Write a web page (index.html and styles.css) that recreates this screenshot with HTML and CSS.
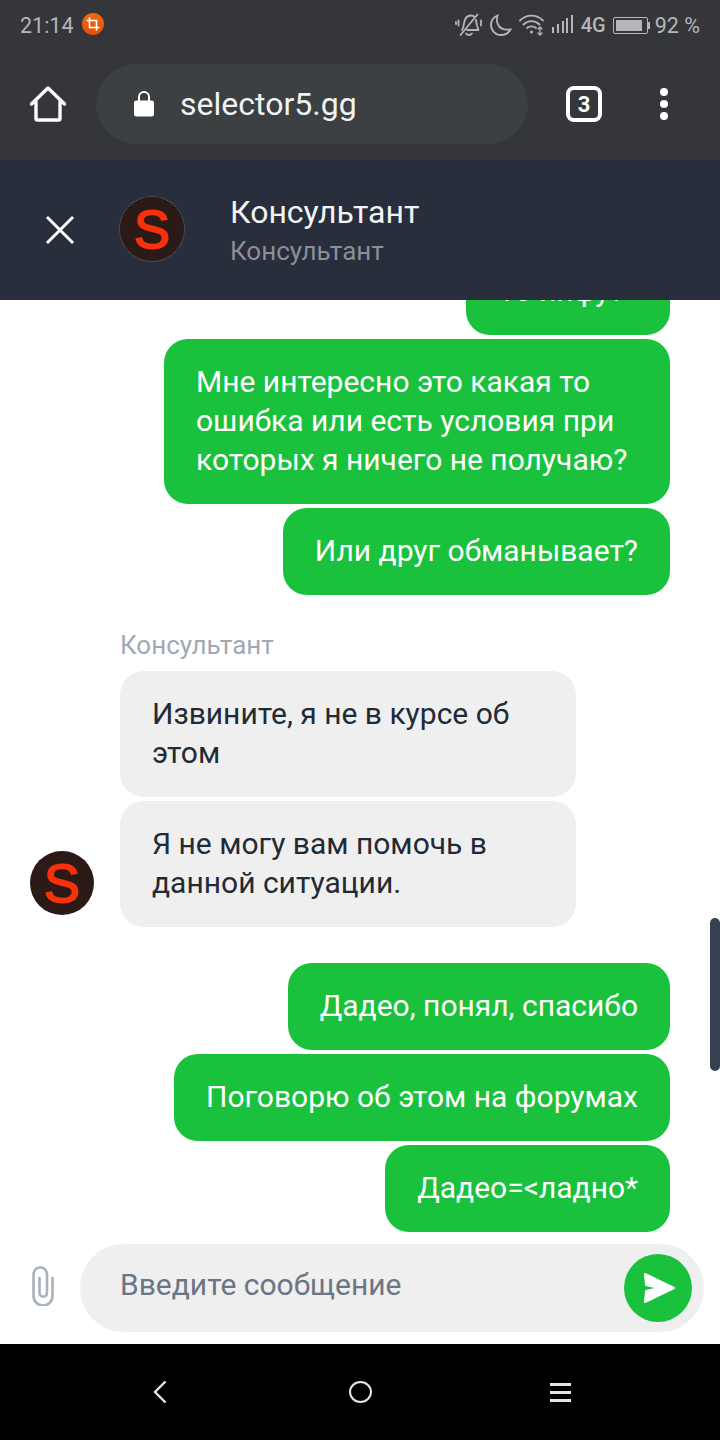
FILE: index.html
```html
<!DOCTYPE html>
<html lang="ru">

<head>
  <meta charset="utf-8">
  <title>selector5.gg</title>
  <link rel="stylesheet" href="styles.css">
</head>

<body>
  <div class="phone">
    <!-- Status bar -->
    <div class="statusBar">
      <div class="statusLeft">
        <span class="statusTime">21:14</span>
        <span class="shotBadge">
          <svg width="14" height="14" viewBox="0 0 14 14" fill="none" stroke="#fff" stroke-width="1.6">
            <path d="M3.5 0.5V10.5H13.5" />
            <path d="M0.5 3.5H10.5V13.5" />
          </svg>
        </span>
      </div>
      <div class="statusRight">
        <svg class="bellIcon" width="28" height="24" viewBox="0 0 28 24" fill="none" stroke="#b4b6b8" stroke-width="1.800" stroke-linecap="round" stroke-linejoin="round">
          <path d="M7 17c1.500-2 1.500-4.500 2-7 .7-4 3-7.500 7-7.500 1.500 0 2.800.5 3.800 1.500" />
          <path d="M21 7c.5 3 .5 6 2 8.500l.5 1.500H12" />
          <path d="M11 20.500c1.500 2 4.500 2 6 0" />
          <path d="M5.500 22L22.500 1.500" />
          <path d="M3.500 7.500v5M1 9v2M26 7.500v5" />
        </svg>
        <svg class="moonIcon" width="22" height="22" viewBox="0 0 22 22" fill="none" stroke="#b4b6b8" stroke-width="1.800">
          <path d="M7.500 1.500C3 3.500 1 7 1 11c0 5.500 4.500 10 10 10 4 0 7.500-1.800 9.500-5.500-6 .8-10.500-.8-12.500-5-1.300-2.800-1.500-5.800-.5-9z" />
        </svg>
        <svg class="wifiIcon" width="25" height="22" viewBox="0 0 25 22" fill="none" stroke="#b4b6b8" stroke-width="1.800" stroke-linecap="round">
          <path d="M1 6.500c6.500-6.500 16.500-6.500 23 0" />
          <path d="M4.500 10.500c4.500-4.500 11.500-4.500 16 0" />
          <path d="M8 14c2.500-2.300 6.500-2.300 9 0" />
          <circle cx="12.500" cy="18" r="1.500" fill="#b4b6b8" stroke="none" />
          <path d="M21 13v8M19 15l2-2 2 2M19 19l2 2 2-2" stroke-width="1.300" />
        </svg>
        <svg class="signalIcon" width="21" height="18" viewBox="0 0 21 18" fill="#b4b6b8">
          <rect x="0" y="12" width="2" height="6" />
          <rect x="5" y="9" width="2" height="9" />
          <rect x="10" y="6" width="2" height="12" />
          <rect x="14" y="3" width="2" height="15" />
          <rect x="19" y="0" width="2" height="18" />
        </svg>
        <span class="statusText net">4G</span>
        <span class="batteryOuter"><span class="batteryLevel"></span></span>
        <span class="batteryBump"></span>
        <span class="statusText pct">92 %</span>
      </div>
    </div>

    <!-- Browser toolbar -->
    <div class="toolbar">
      <svg class="homeIcon" width="38" height="38" viewBox="0 0 38 38" fill="none" stroke="#fff" stroke-width="3.400" stroke-linejoin="round" stroke-linecap="round">
        <path d="M2.500 19L19 3l16.500 16" />
        <path d="M7 16.500V33.500q0 1.500 1.500 1.500h21q1.500 0 1.500-1.500V16.500" />
      </svg>
      <div class="urlBar">
        <svg width="22" height="28" viewBox="0 0 22 28" fill="#fff">
          <path d="M3 10.500h16a2.500 2.500 0 0 1 2 2.500v11a2.500 2.500 0 0 1-2.500 2.500h-15A2.500 2.500 0 0 1 1 24V13a2.500 2.500 0 0 1 2-2.500z" />
          <path d="M6 12V7a5 5 0 0 1 10 0v5" fill="none" stroke="#fff" stroke-width="2" />
        </svg>
        <span class="urlText">selector5.gg</span>
      </div>
      <div class="tabCount">3</div>
      <div class="menuDots"><i></i><i></i><i></i></div>
    </div>

    <!-- Chat header -->
    <div class="chatHeader">
      <svg class="closeIcon" width="30" height="30" viewBox="0 0 30 30" stroke="#fff" stroke-width="3">
        <path d="M2 2L28 28M28 2L2 28" />
      </svg>
      <div class="avatar headerAvatar">S</div>
      <div class="headerText">
        <div class="headerName">Консультант</div>
        <div class="headerRole">Консультант</div>
      </div>
    </div>

    <!-- Messages -->
    <div class="chat">
      <div class="msg msgOut msgFirst">То инфу?</div>
      <div class="msg msgOut">Мне интересно это какая то ошибка или есть условия при которых я ничего не получаю?</div>
      <div class="msg msgOut">Или друг обманывает?</div>

      <div class="agentBlock">
        <div class="agentAvatarCol"><div class="avatar">S</div></div>
        <div class="agentMsgs">
          <div class="agentName">Консультант</div>
          <div class="msg msgIn">Извините, я не в курсе об этом</div>
          <div class="msg msgIn">Я не могу вам помочь в данной ситуации.</div>
        </div>
      </div>

      <div class="msg msgOut">Дадео, понял, спасибо</div>
      <div class="msg msgOut">Поговорю об этом на форумах</div>
      <div class="msg msgOut">Дадео=&lt;ладно*</div>
      <div class="scrollThumb"></div>
    </div>

    <!-- Composer -->
    <div class="composer">
      <svg class="clipIcon" width="22" height="40" viewBox="0 0 22 40" fill="none" stroke="#a9b1bd" stroke-width="2.600" stroke-linecap="round">
        <path d="M20.500 12V30a9.500 9.500 0 0 1-19 0V8.500a6.750 7.200 0 0 1 13.500 0V27a3.750 3.750 0 0 1-7.500 0V12" />
      </svg>
      <div class="inputBox">
        <span class="inputHint">Введите сообщение</span>
        <div class="sendBtn">
          <svg width="33" height="32" viewBox="0 0 33 32" fill="#fff" stroke="#fff" stroke-width="2" stroke-linejoin="round">
            <path d="M2 2L31 16 2 30 3 19 16 16 3 13z" />
          </svg>
        </div>
      </div>
    </div>

    <!-- Android nav -->
    <div class="navBar">
      <svg width="14" height="24" viewBox="0 0 14 24" fill="none" stroke="#e6e6e6" stroke-width="2.400">
        <path d="M12.500 1.500L2 12l10.500 10.500" />
      </svg>
      <span class="navCircle"></span>
      <span class="navMenu"><i></i><i></i><i></i></span>
    </div>
  </div>
</body>

</html>
```

FILE: styles.css
```css
* {
  box-sizing: border-box;
}

body {
  margin: 0;
  background: #fff;
  font-family: Roboto, "Noto Sans", sans-serif;
}

.phone {
  width: 720px;
  height: 1440px;
  display: flex;
  flex-direction: column;
  overflow: hidden;
}

/* Status bar */
.statusBar {
  height: 48px;
  flex: none;
  background: #35363a;
  display: flex;
  justify-content: space-between;
  align-items: center;
  padding: 2px 20px 0 20px;
  color: #b4b6b8;
}

.statusLeft,
.statusRight {
  display: flex;
  align-items: center;
}

.statusTime {
  font-size: 21.500px;
}

.shotBadge {
  width: 22px;
  height: 22px;
  margin-left: 8px;
  margin-top: -2px;
  border-radius: 50%;
  background: linear-gradient(#f26a12, #e3500a);
  display: flex;
  align-items: center;
  justify-content: center;
}

.bellIcon,
.moonIcon,
.wifiIcon {
  margin-right: 7px;
  margin-top: -1px;
}

.wifiIcon {
  margin-right: 8px;
}

.signalIcon {
  margin-top: -3px;
}

.statusText {
  font-size: 21.500px;
}

.statusText.net {
  font-size: 20px;
  font-weight: 500;
  margin: 0 7px 0 8px;
}

.batteryOuter {
  width: 35px;
  height: 17px;
  border: 1.500px solid #b4b6b8;
  border-radius: 2px;
  padding: 2px;
  display: block;
}

.batteryLevel {
  display: block;
  width: 90%;
  height: 100%;
  background: #b4b6b8;
}

.batteryBump {
  width: 2px;
  height: 7px;
  background: #b4b6b8;
  margin-right: 5px;
}

/* Toolbar */
.toolbar {
  height: 112px;
  flex: none;
  background: #35363a;
  display: flex;
  align-items: center;
  padding: 0 0 0 29px;
}

.homeIcon {
  flex: none;
}

.urlBar {
  width: 432px;
  height: 80px;
  margin-left: 29px;
  border-radius: 40px;
  background: #3c4043;
  display: flex;
  align-items: center;
  padding-left: 37px;
}

.urlText {
  color: #f1f3f4;
  font-size: 32px;
  margin-left: 25px;
}

.tabCount {
  width: 36px;
  height: 36px;
  margin-left: 38px;
  border: 4px solid #fff;
  border-radius: 8px;
  color: #fff;
  font-size: 22px;
  font-weight: 700;
  display: flex;
  align-items: center;
  justify-content: center;
}

.menuDots {
  margin-left: 58px;
  display: flex;
  flex-direction: column;
  gap: 4px;
}

.menuDots i {
  width: 8px;
  height: 8px;
  border-radius: 50%;
  background: #fff;
}

/* Chat header */
.chatHeader {
  height: 140px;
  flex: none;
  background: #282e3b;
  display: flex;
  align-items: center;
  padding: 0 0 0 45px;
}

.closeIcon {
  flex: none;
}

.avatar {
  width: 64px;
  height: 64px;
  flex: none;
  border-radius: 50%;
  background: #2b1a15;
  color: #f9300c;
  font-family: "Liberation Sans", Arial, sans-serif;
  font-size: 54px;
  font-weight: 400;
  line-height: 64px;
  text-align: center;
  -webkit-text-stroke: 1.800px #f9300c;
}

.headerAvatar {
  margin-left: 45px;
  margin-top: -3px;
  outline: 1px dotted #6d6d6d;
}

.headerText {
  margin-left: 46px;
  margin-top: 1px;
}

.headerName {
  color: #f3f4f6;
  font-size: 32px;
  line-height: 40px;
}

.headerRole {
  color: #8a8f98;
  font-size: 26px;
  line-height: 36px;
  margin-top: 1px;
}

/* Messages */
.chat {
  position: relative;
  flex: 1;
  min-height: 0;
  background: #fff;
  display: flex;
  flex-direction: column;
  justify-content: flex-end;
  align-items: flex-end;
  gap: 4px;
  padding-right: 50px;
  overflow: hidden;
}

.msg {
  flex: none;
  padding: 23px 32px 25px;
  border-radius: 24px;
  font-size: 30px;
  line-height: 39px;
}

.msgOut {
  background: #1ac13c;
  color: #fff;
  max-width: 506px;
}

.msgFirst {
  min-width: 204px;
}

.msgIn {
  background: #efefef;
  color: #222a36;
  width: 456px;
}

.agentBlock {
  flex: none;
  align-self: flex-start;
  display: flex;
  align-items: flex-end;
  margin: 28px 0 32px 30px;
}

.agentAvatarCol {
  width: 90px;
  padding-bottom: 12px;
}

.agentMsgs {
  display: flex;
  flex-direction: column;
  gap: 4px;
}

.agentName {
  color: #a1a8b3;
  font-size: 26px;
  line-height: 36px;
  margin-bottom: 4px;
}

.scrollThumb {
  position: absolute;
  right: 0;
  top: 618px;
  width: 10px;
  height: 153px;
  border-radius: 5px;
  background: #374151;
}

/* Composer */
.composer {
  height: 112px;
  flex: none;
  background: #fff;
  display: flex;
  align-items: center;
  padding: 0 16px 0 32px;
}

.clipIcon {
  flex: none;
  margin-top: -4px;
}

.inputBox {
  flex: 1;
  height: 88px;
  margin-left: 26px;
  border-radius: 44px;
  background: #efefef;
  display: flex;
  align-items: center;
  justify-content: space-between;
  padding: 0 12px 0 40px;
}

.inputHint {
  color: #6b7585;
  font-size: 30px;
  margin-top: -8px;
}

.sendBtn {
  width: 68px;
  height: 68px;
  border-radius: 50%;
  background: #1ac13c;
  display: flex;
  align-items: center;
  justify-content: center;
  padding-left: 3px;
}

/* Android nav */
.navBar {
  height: 96px;
  flex: none;
  background: #000;
  display: flex;
  align-items: center;
  padding: 0 0 0 153px;
}

.navCircle {
  width: 23px;
  height: 22px;
  margin-left: 182px;
  border: 2.500px solid #e6e6e6;
  border-radius: 50%;
}

.navMenu {
  width: 21px;
  margin-left: 178px;
  display: flex;
  flex-direction: column;
  gap: 5px;
}

.navMenu i {
  height: 3px;
  background: #e6e6e6;
}
```
